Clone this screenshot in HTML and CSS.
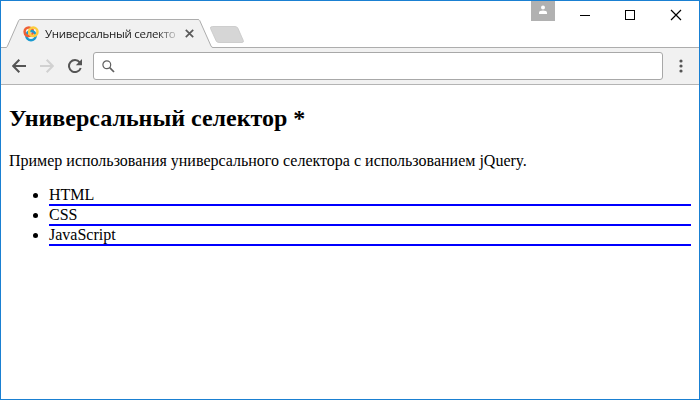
FILE: index.html
```html
<!DOCTYPE html>
<html lang="ru">
<head>
<meta charset="utf-8">
<title>Универсальный селектор</title>
<link rel="stylesheet" href="styles.css">
</head>
<body>
<div class="window">
  <header class="titlebar">
    <div class="tab">
      <svg class="tab-shape" width="207" height="29" viewBox="0 0 207 29"><path d="M0 29V28.500C.8 28.500 1 28 1.500 27L12.700 1.500Q13.200 .5 14 .5H192Q193.200 .5 193.700 1.500L205 27Q205.700 28.500 207 28.500V29Z" fill="#f1f1f1"/><path d="M0 28.500C.8 28.500 1 28 1.500 27L12.700 1.500Q13.200 .5 14 .5H192Q193.200 .5 193.700 1.500L205 27Q205.700 28.500 207 28.500" fill="none" stroke="#adadad"/></svg>
      <svg class="favicon" width="16" height="16" viewBox="0 0 16 16" fill="none" stroke-width="2.500"><circle cx="5.800" cy="5.700" r="4.200" stroke="#ee6035"/><circle cx="8" cy="9.600" r="4.700" stroke="#199ad0"/><circle cx="10.300" cy="5.800" r="4.200" stroke="#fccb3c"/><path d="M2 7.500Q3 10 5.800 9.900" stroke="#ee6035"/></svg>
      <span class="tab-title">Универсальный селекто</span>
      <svg class="tab-close" width="9" height="9" viewBox="0 0 9 9"><path d="M.8.8l7.400 7.400M8.200.8L.8 8.200" stroke="#5a5a5a" stroke-width="1.700"/></svg>
    </div>
    <svg class="new-tab" width="37" height="19" viewBox="0 0 37 19"><path d="M3.500 1.500H26Q28 1.500 28.800 3L34.300 15.500Q35 17.500 33 17.500H10Q8 17.500 7.200 16L1.500 3.500Q1 1.500 3.500 1.500Z" fill="#d6d6d6" stroke="#c6c6c6" stroke-width=".8"/></svg>
    <div class="controls">
      <div class="profile"><svg width="10" height="10" viewBox="0 0 10 10" fill="#fff"><circle cx="5" cy="2.400" r="2"/><path d="M1 9V7.400Q1.300 5.600 5 5.600T9 7.400V9Z"/></svg></div>
      <svg class="win-buttons" width="102" height="12" viewBox="0 0 102 12" fill="none" stroke="#000" shape-rendering="crispEdges"><path d="M0 6.500H10"/><rect x="45.500" y="1.500" width="9" height="9"/><path d="M91 1l10 10M101 1L91 11" shape-rendering="auto" stroke-width="1.200"/></svg>
    </div>
  </header>
  <nav class="toolbar">
    <svg width="14" height="14" viewBox="0 0 14 14" fill="none" stroke="#555" stroke-width="2"><path d="M14 7H1.500M7.300 .8L1.200 7l6.100 6.200"/></svg>
    <svg width="14" height="14" viewBox="0 0 14 14" fill="none" stroke="#d1d1d1" stroke-width="2"><path d="M0 7H12.500M6.700 .8L12.800 7l-6.100 6.200"/></svg>
    <svg width="14" height="14" viewBox="0 0 14 14"><path d="M11.700 3.300A6 6 0 1 0 12.700 9" fill="none" stroke="#555" stroke-width="2"/><path d="M14 0V6.200H7.800Z" fill="#555"/></svg>
    <div class="omnibox"><svg width="13" height="13" viewBox="0 0 13 13" fill="none" stroke="#606060"><circle cx="4.800" cy="4.800" r="3.900" stroke-width="1.200"/><path d="M7.700 7.700l4.300 4.300" stroke-width="1.700"/></svg></div>
    <svg class="menu" width="4" height="14" viewBox="0 0 4 14" fill="#555"><circle cx="2" cy="2" r="1.600"/><circle cx="2" cy="7" r="1.600"/><circle cx="2" cy="12" r="1.600"/></svg>
  </nav>
  <main class="page">
    <h2>Универсальный селектор *</h2>
    <p>Пример использования универсального селектора с использованием jQuery.</p>
    <ul>
      <li>HTML</li>
      <li>CSS</li>
      <li>JavaScript</li>
    </ul>
  </main>
</div>
</body>
</html>
```
FILE: styles.css
```css
* { box-sizing: border-box; }
body { margin: 0; background: #fff; }
.window {
  height: 400px;
  border: 1px solid #1a80d2;
  display: flex;
  flex-direction: column;
  overflow: hidden;
}
.titlebar {
  flex: none;
  height: 47px;
  display: flex;
  align-items: flex-end;
  border-bottom: 1px solid #adadad;
}
.tab {
  position: relative;
  display: flex;
  align-items: center;
  width: 207px;
  height: 29px;
  margin: 0 0 -1px 5px;
  padding-left: 17px;
}
.tab-shape { position: absolute; left: 0; top: 0; }
.favicon { position: relative; }
.tab-title {
  position: relative;
  width: 134px;
  margin-left: 6px;
  white-space: nowrap;
  font: 11.5px/18px "Open Sans", sans-serif;
  letter-spacing: -0.3px;
  color: #222;
  -webkit-mask-image: linear-gradient(to right, #000 112px, transparent 136px);
  mask-image: linear-gradient(to right, #000 112px, transparent 136px);
}
.tab-close { position: relative; margin-left: 6px; }
.new-tab { margin: 0 0 3px -4px; }
.controls {
  align-self: flex-start;
  display: flex;
  margin-left: auto;
  margin-right: 17px;
}
.profile {
  width: 24px;
  height: 20px;
  display: flex;
  justify-content: center;
  padding-top: 4px;
  background: #b1b1b1;
}
.win-buttons { margin: 8px 0 0 25px; }
.toolbar {
  flex: none;
  height: 37px;
  display: flex;
  align-items: center;
  gap: 14px;
  padding: 0 16px 0 11px;
  background: #f1f1f1;
  border-bottom: 1px solid #b4b4b4;
}
.omnibox {
  flex: 1;
  height: 28px;
  display: flex;
  align-items: center;
  margin-left: -3px;
  padding-left: 8px;
  background: #fff;
  border: 1px solid #a8a8a8;
  border-radius: 3px;
}
.menu { margin-left: 2px; }
.page {
  flex: 1;
  padding: 0 8px;
  font: 16px/18px "Liberation Serif", serif;
  color: #000;
}
.page h2 { margin: 20px 0; font-size: 24px; line-height: 27px; }
.page p { margin: 0 0 16px; }
.page ul { margin: 0; padding-left: 40px; }
.page li { border-bottom: 2px solid #00f; }
```
